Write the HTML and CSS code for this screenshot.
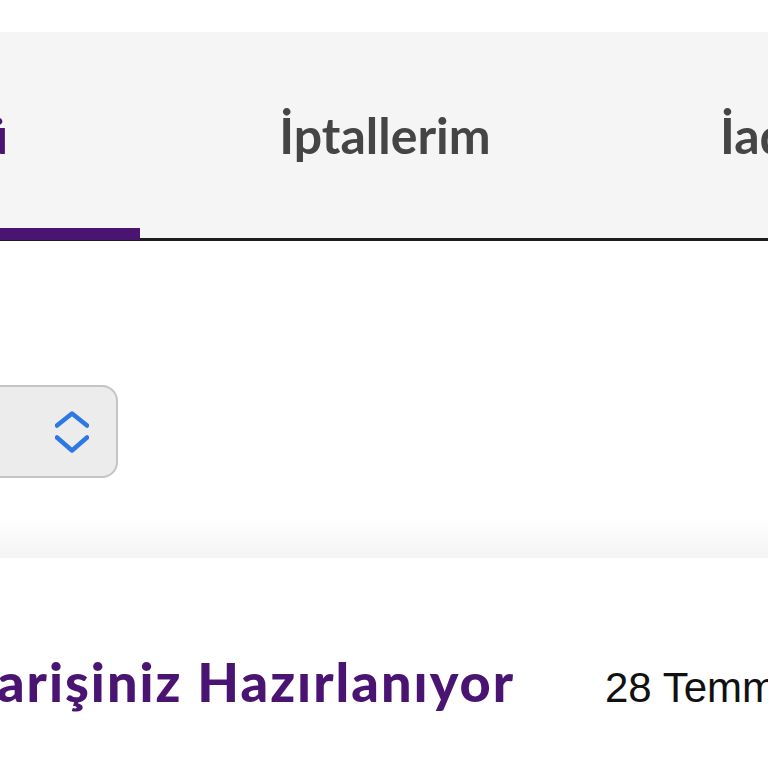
FILE: index.html
```html
<!DOCTYPE html>
<html lang="tr">
<head>
<meta charset="utf-8">
<title>Siparişlerim</title>
<link rel="stylesheet" href="styles.css">
</head>
<body>
<div class="page">
  <div class="top-space"></div>
  <nav class="tabs">
    <div class="tab tab-first active"><span>Tümü</span></div>
    <div class="tab tab-mid"><span>İptallerim</span></div>
    <div class="tab tab-last"><span>İadelerim</span></div>
  </nav>
  <section class="filter">
    <div class="select">
      <span class="select-label">Son 3 ay</span>
      <svg class="select-icon" width="34" height="46" viewBox="0 0 34 46" aria-hidden="true">
        <path d="M2 16.5 L17 4.5 L32 16.5" fill="none" stroke="#2d78e3" stroke-width="4.5" stroke-linecap="round" stroke-linejoin="round"/>
        <path d="M2 28.5 L17 41.5 L32 28.5" fill="none" stroke="#2d78e3" stroke-width="4.5" stroke-linecap="round" stroke-linejoin="round"/>
      </svg>
    </div>
  </section>
  <div class="fade"></div>
  <section class="order">
    <div class="order-row">
      <div class="order-title-box"><h2 class="order-title">Siparişiniz Hazırlanıyor</h2></div>
      <div class="order-date">28 Temmuz 2024</div>
    </div>
  </section>
</div>
</body>
</html>
```
FILE: styles.css
```css
html, body {
  margin: 0;
  padding: 0;
  background: #ffffff;
}
.page {
  width: 768px;
  height: 768px;
  overflow: hidden;
  font-family: "Lato", "Liberation Sans", sans-serif;
}
.top-space {
  height: 32px;
}
.tabs {
  display: flex;
  height: 206px;
  background: #f5f5f5;
  border-bottom: 3px solid #1c1c1c;
  margin-left: -300px;
}
.tab {
  position: relative;
  display: flex;
  align-items: center;
  flex: 0 0 auto;
  font-size: 50px;
  font-weight: 700;
  color: #454545;
  white-space: nowrap;
  box-sizing: border-box;
}
.tab-first {
  width: 440px;
  justify-content: flex-end;
  padding-right: 132px;
  color: #4a1572;
}
.tab-first.active::after {
  content: "";
  position: absolute;
  left: 0;
  right: 0;
  bottom: -2px;
  height: 12px;
  background: #4a1572;
}
.tab-mid {
  width: 490px;
  justify-content: center;
}
.tab-last {
  padding-left: 90px;
}
.filter {
  padding-top: 144px;
  height: 276px;
  box-sizing: border-box;
}
.select {
  display: flex;
  align-items: center;
  justify-content: space-between;
  width: 300px;
  height: 93px;
  margin-left: -182px;
  box-sizing: border-box;
  border: 2px solid #c4c4c4;
  border-radius: 16px;
  background: #ececec;
  padding: 0 27px 0 20px;
}
.select-label {
  font-size: 36px;
  color: #222;
}
.select-icon {
  display: block;
}
.fade {
  height: 41px;
  background: linear-gradient(to bottom, #ffffff 0%, #f4f4f4 100%);
}
.order {
  padding-top: 92px;
}
.order-row {
  display: flex;
  align-items: baseline;
  gap: 90px;
}
.order-title-box {
  flex: 0 0 515px;
  min-width: 0;
  display: flex;
  justify-content: flex-end;
}
.order-title {
  flex: 0 0 auto;
  margin: 0;
  font-size: 54px;
  font-weight: 900;
  letter-spacing: 2px;
  color: #4a1572;
  white-space: nowrap;
  line-height: 1.2;
}
.order-date {
  font-family: "Liberation Sans", Arial, sans-serif;
  font-size: 42px;
  color: #111;
  white-space: nowrap;
}
```
